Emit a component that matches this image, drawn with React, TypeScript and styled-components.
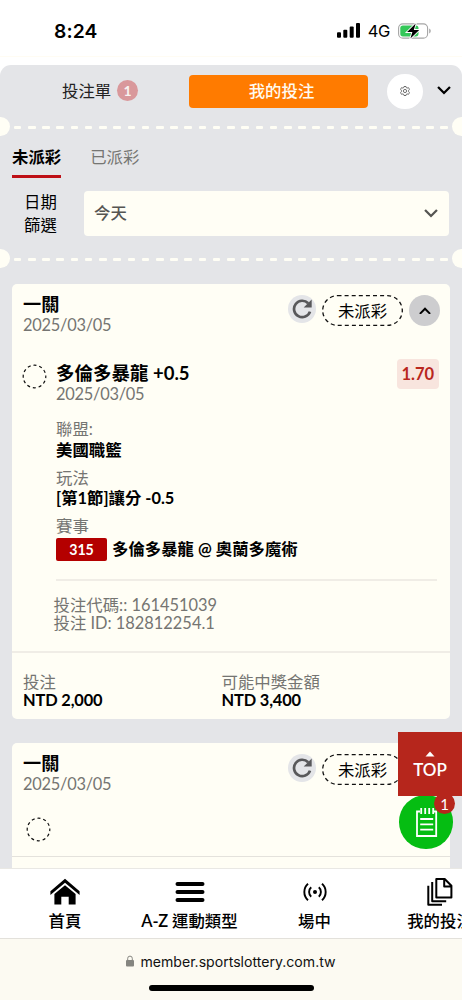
import React from 'react';
import styled, { createGlobalStyle } from 'styled-components';

const Global = createGlobalStyle`
  * { box-sizing: border-box; }
  body { margin: 0; background: #fff; }
`;

const cream = '#fffef5';
const grey = '#e4e5e8';
const muted = '#757572';

const Page = styled.div`
  width: 462px;
  height: 1000px;
  overflow: hidden;
  position: relative;
  display: flex;
  flex-direction: column;
  background: #fff;
  color: #000;
  font-family: Lato, 'Noto Sans CJK TC', sans-serif;
  font-size: 16.4px;
`;

const StatusBar = styled.header`
  height: 57px;
  flex: none;
  display: flex;
  align-items: center;
  justify-content: space-between;
  padding: 5px 31px 0 54px;
  border-bottom: 1px solid #fffcf3;
  margin-bottom: 8px;
  font-family: Inter, sans-serif;
`;
const Clock = styled.span`
  font-size: 19.3px;
  font-weight: 600;
  letter-spacing: 0.1px;
`;
const StatusIcons = styled.div`
  display: flex;
  align-items: center;
  height: 22px;
`;
const Network = styled.span`
  font-size: 16.5px;
  margin: 1px 8px 0 7.5px;
  letter-spacing: -0.3px;
`;

const Panel = styled.main`
  flex: 1;
  min-height: 0;
  overflow: hidden;
  background: ${grey};
  border-radius: 11px 11px 0 0;
`;

const TopTabs = styled.div`
  height: 51.7px;
  display: flex;
  align-items: center;
`;
const SlipTab = styled.div`
  width: 189px;
  padding-left: 62px;
  display: flex;
  align-items: center;
  gap: 6px;
  line-height: 24px;
  color: #222;
`;
const SlipCount = styled.span`
  width: 21px;
  height: 21px;
  border-radius: 50%;
  background: #d9989b;
  color: #f8f3f0;
  font-size: 14px;
  font-weight: 700;
  line-height: 22px;
  text-align: center;
`;
const ActiveTab = styled.div`
  width: 179px;
  height: 33px;
  margin-top: 1px;
  padding-left: 6px;
  border-radius: 4px;
  background: #ff7b00;
  color: #fffaf0;
  font-weight: 500;
  line-height: 32px;
  text-align: center;
`;
const Settings = styled.div`
  width: 35.5px;
  height: 35.5px;
  margin: 1px 14px 0 19px;
  border-radius: 50%;
  background: #fff;
  display: grid;
  place-items: center;
`;

const Perforation = styled.div`
  height: 19.4px;
  display: flex;
  align-items: center;
  justify-content: space-between;
`;
const Notch = styled.i<{ $right?: boolean }>`
  width: 9.6px;
  height: 19.4px;
  background: ${cream};
  border-radius: ${p => (p.$right ? '10px 0 0 10px' : '0 10px 10px 0')};
`;
const Dashes = styled.div`
  display: flex;
  justify-content: space-between;
  width: 434.4px;
  padding-top: 2.6px;
`;
const Dash = styled.i`
  width: 7.6px;
  height: 2.4px;
  border-radius: 1px;
  background: ${cream};
`;

const SubTabs = styled.div`
  height: 42px;
  display: flex;
  gap: 29px;
  padding: 9px 12px 0;
`;
const SubTab = styled.div<{ $active?: boolean }>`
  height: 32.8px;
  line-height: 24px;
  font-weight: ${p => (p.$active ? 700 : 400)};
  color: ${p => (p.$active ? '#000' : muted)};
  border-bottom: 3.4px solid ${p => (p.$active ? '#be1016' : 'transparent')};
`;
const Filter = styled.div`
  height: 70.5px;
  display: flex;
  align-items: center;
  padding: 0 13px 0 24px;
`;
const FilterLabel = styled.div`
  width: 60px;
  line-height: 23.5px;
`;
const Select = styled.div`
  flex: 1;
  height: 45px;
  display: flex;
  align-items: center;
  justify-content: space-between;
  padding: 0 11px 0 10px;
  border-radius: 4px;
  background: ${cream};
  color: #555552;
  font-weight: 500;
  line-height: 24px;
`;

const CardList = styled.div`
  display: flex;
  flex-direction: column;
  gap: 24px;
  padding: 16px 12px 0;
`;
const Card = styled.section`
  background: ${cream};
  border-radius: 5px;
`;
const CardHead = styled.div`
  height: 79px;
  display: flex;
  padding: 9.6px 10px 0 11px;
`;
const Title = styled.div<{ $size?: number }>`
  font-size: ${p => p.$size ?? 18.2}px;
  font-weight: 700;
  line-height: 21px;
  white-space: nowrap;
`;
const DateText = styled.div`
  line-height: 19px;
  color: ${muted};
  letter-spacing: -0.25px;
`;
const HeadActions = styled.div`
  margin-left: auto;
  height: 34px;
  display: flex;
  align-items: center;
  gap: 6px;
`;
const Refresh = styled.div`
  width: 28.5px;
  height: 28.5px;
  margin-top: -3px;
  border-radius: 50%;
  background: ${grey};
  display: grid;
  place-items: center;
`;
const Status = styled.div`
  position: relative;
  width: 81px;
  height: 31px;
  line-height: 32px;
  text-align: center;
`;
const StatusOutline = styled.svg`
  position: absolute;
  inset: 0;
`;
const Collapse = styled.div`
  width: 31px;
  height: 31px;
  border-radius: 50%;
  background: #cdcdcf;
  display: grid;
  place-items: center;
`;
const Selection = styled.div`
  display: flex;
  padding: 0 11px 0 10px;
  height: 55.5px;
`;
const Marker = styled.div`
  width: 25px;
  padding-top: 1px;
`;
const SelectionText = styled.div`
  flex: 1;
  margin-left: 9px;
`;
const Odds = styled.div`
  width: 42.5px;
  height: 30px;
  margin-top: -4px;
  border-radius: 4px;
  background: #f8e5de;
  color: #b9271d;
  font-size: 16.5px;
  font-weight: 700;
  line-height: 31px;
  text-align: center;
`;
const Details = styled.div`
  margin: 0 13px 0 44px;
  height: 162.5px;
  padding-top: 0.6px;
  border-bottom: 2px solid #f0ede6;
`;
const Detail = styled.div`
  height: 48.5px;
`;
const Label = styled.div`
  line-height: 20.5px;
  color: ${muted};
`;
const Value = styled.div`
  display: flex;
  align-items: center;
  font-weight: 700;
  line-height: 20.5px;
  white-space: pre;
`;
const MatchNo = styled.span`
  width: 51px;
  height: 23.5px;
  margin: 1px 5px 0 0;
  border-radius: 2px;
  background: #b40000;
  color: #fff;
  font-size: 14.2px;
  line-height: 24px;
  text-align: center;
`;
const Codes = styled.div`
  height: 72px;
  padding: 15.3px 0 0 41.5px;
  line-height: 18px;
  color: ${muted};
  border-bottom: 2px solid #f0ede6;
`;
const Totals = styled.div`
  height: 66px;
  padding: 19px 11px 0;
  display: grid;
  grid-template-columns: 198.5px 1fr;
`;
const Amount = styled.div`
  font-weight: 700;
  line-height: 15.5px;
  letter-spacing: -0.15px;
`;
const PendingRow = styled.div`
  height: 35px;
  margin-top: -5px;
  padding: 0 13.5px;
`;
const NextRow = styled.div`
  height: 60px;
  margin-top: 4px;
  border-top: 1px solid #e4e2dc;
`;

const TopButton = styled.div`
  position: absolute;
  left: 398px;
  top: 732px;
  width: 64px;
  height: 64px;
  background: #b6261c;
  color: #fff;
  display: flex;
  flex-direction: column;
  align-items: center;
  padding-top: 19px;
  font-size: 17px;
  font-weight: 600;
  line-height: 26px;
  z-index: 2;
`;
const SlipButton = styled.div`
  position: absolute;
  left: 399px;
  top: 795px;
  width: 53.5px;
  height: 53.5px;
  border-radius: 50%;
  background: #05bd12;
  padding: 12px 0 0 16px;
`;
const SlipBadge = styled.span`
  position: absolute;
  left: 35px;
  top: -2px;
  width: 21px;
  height: 21px;
  border-radius: 50%;
  background: #b6261c;
  color: #fff;
  font-size: 15px;
  line-height: 22px;
  text-align: center;
`;

const NavBar = styled.nav`
  height: 70px;
  flex: none;
  display: grid;
  grid-template-columns: 130px 119px 131px 120px;
  background: #fff;
  border-top: 1px solid #e9e8e4;
`;
const NavItem = styled.div`
  display: flex;
  flex-direction: column;
  align-items: center;
  font-weight: 500;
  line-height: 22px;
  white-space: nowrap;
`;
const NavIcon = styled.div`
  height: 41px;
  padding-top: 8px;
`;
const NavLabel = styled.div`
  b { font-weight: 600; letter-spacing: -0.2px; }
`;
const Browser = styled.footer`
  height: 62px;
  flex: none;
  display: flex;
  flex-direction: column;
  align-items: center;
  background: #fcfaf2;
  border-top: 1px solid #e3e1db;
`;
const Address = styled.div`
  height: 45.5px;
  padding-bottom: 1.5px;
  display: flex;
  align-items: center;
  gap: 6px;
  font-family: Inter, sans-serif;
  font-size: 14.1px;
  color: #111;
`;
const HomeIndicator = styled.div`
  width: 165px;
  height: 6px;
  border-radius: 3px;
  background: #000;
`;

const Chevron = ({ up = false, color = '#000', size = 14 }: { up?: boolean; color?: string; size?: number }) => (
  <svg width={size} height={size * 0.64} viewBox="0 0 14 9" fill="none" stroke={color} strokeWidth="2.3">
    <path d={up ? 'M1 8 7 2l6 6' : 'M1 1l6 6 6-6'} />
  </svg>
);

const PendingCircle = () => (
  <svg width="25" height="25" viewBox="0 0 25 25" fill="none" stroke="#111" strokeWidth="1.2">
    <circle cx="12.5" cy="12.5" r="11.3" strokeDasharray="3.1 2.82" strokeDashoffset="1.5" />
  </svg>
);

const Divider = () => (
  <Perforation>
    <Notch />
    <Dashes>{Array.from({ length: 31 }, (_, i) => <Dash key={i} />)}</Dashes>
    <Notch $right />
  </Perforation>
);

const Head = () => (
  <CardHead>
    <div>
      <Title>一關</Title>
      <DateText>2025/03/05</DateText>
    </div>
    <HeadActions>
      <Refresh>
        <svg width="20" height="20" viewBox="0 0 20 20" fill="none" stroke="#58585a" strokeWidth="2.7">
          <path d="M16.2 4.3A8.2 8.2 0 1 0 18 12.6" />
          <path d="M19.7.6v8h-8z" fill="#58585a" stroke="none" />
        </svg>
      </Refresh>
      <Status>
        <StatusOutline width="81" height="31" fill="none" stroke="#111" strokeWidth="1.3">
          <rect x=".7" y=".7" width="79.6" height="29.6" rx="14.8" strokeDasharray="4 3.1" />
        </StatusOutline>
        未派彩
      </Status>
      <Collapse><Chevron up size={12} /></Collapse>
    </HeadActions>
  </CardHead>
);

export default function App() {
  return (
    <Page>
      <Global />
      <StatusBar>
        <Clock>8:24</Clock>
        <StatusIcons>
          <svg width="23" height="15" viewBox="0 0 23 15">
            <rect x="0" y="9.3" width="4" height="5.4" rx="1" />
            <rect x="6.3" y="6.8" width="4" height="7.9" rx="1" />
            <rect x="12.7" y="3.5" width="4" height="11.2" rx="1" />
            <rect x="19" y="0" width="4" height="14.7" rx="1" />
          </svg>
          <Network>4G</Network>
          <svg width="33" height="16" viewBox="0 0 33 16">
            <rect x=".6" y=".9" width="29" height="14.2" rx="4.2" fill="none" stroke="#a5a5a5" strokeWidth="1.1" />
            <path d="M31.2 5.6v4.8c1-.4 1.5-1.3 1.5-2.4s-.5-2-1.5-2.4z" fill="#a5a5a5" />
            <rect x="2.3" y="2.6" width="18.2" height="10.8" rx="2.6" fill="#34c759" />
            <path d="M17.7.6 9.1 9h5.3l-2 6.4L21.2 7h-5.4z" fill="#000" stroke="#fff" strokeWidth="1.8" paintOrder="stroke" />
          </svg>
        </StatusIcons>
      </StatusBar>

      <Panel>
        <TopTabs>
          <SlipTab>投注單<SlipCount>1</SlipCount></SlipTab>
          <ActiveTab>我的投注</ActiveTab>
          <Settings>
            <svg width="10" height="10" viewBox="0 0 20 20" fill="none" stroke="#444" strokeWidth="1.5">
              <path d="M8 1h4l.7 2.4 1.6.8 2.5-1 2.2 3.4-1.8 1.9v3l1.8 1.9-2.2 3.4-2.5-1-1.6.8L12 19H8l-.7-2.4-1.6-.8-2.5 1L1 13.4l1.8-1.9v-3L1 6.6l2.2-3.4 2.5 1 1.6-.8z" />
              <circle cx="10" cy="10" r="3.2" />
            </svg>
          </Settings>
          <Chevron />
        </TopTabs>
        <Divider />
        <SubTabs>
          <SubTab $active>未派彩</SubTab>
          <SubTab>已派彩</SubTab>
        </SubTabs>
        <Filter>
          <FilterLabel>日期<br />篩選</FilterLabel>
          <Select>今天<Chevron color="#555552" /></Select>
        </Filter>
        <Divider />

        <CardList>
          <Card>
            <Head />
            <Selection>
              <Marker><PendingCircle /></Marker>
              <SelectionText>
                <Title $size={18.5}>多倫多暴龍 +0.5</Title>
                <DateText>2025/03/05</DateText>
              </SelectionText>
              <Odds>1.70</Odds>
            </Selection>
            <Details>
              <Detail><Label>聯盟:</Label><Value>美國職籃</Value></Detail>
              <Detail><Label>玩法</Label><Value>[第1節]讓分 -0.5</Value></Detail>
              <Detail><Label>賽事</Label><Value><MatchNo>315</MatchNo>多倫多暴龍 @ 奧蘭多魔術</Value></Detail>
            </Details>
            <Codes>
              <div>投注代碼:: 161451039</div>
              <div>投注 ID: 182812254.1</div>
            </Codes>
            <Totals>
              <div><Label>投注</Label><Amount>NTD 2,000</Amount></div>
              <div><Label>可能中獎金額</Label><Amount>NTD 3,400</Amount></div>
            </Totals>
          </Card>

          <Card>
            <Head />
            <PendingRow><PendingCircle /></PendingRow>
            <NextRow />
          </Card>
        </CardList>
      </Panel>

      <NavBar>
        <NavItem>
          <NavIcon>
            <svg width="30" height="28" viewBox="0 0 30 28">
              <path d="M15 1.8 29.6 14.2v3.8L15 5.8.4 18v-3.8z" />
              <path d="M15 8.2 25.6 17v10.5h-6.9v-7.8h-7.4v7.8H4.4V17z" />
            </svg>
          </NavIcon>
          <NavLabel>首頁</NavLabel>
        </NavItem>
        <NavItem>
          <NavIcon>
            <svg width="30" height="28" viewBox="0 0 30 28" stroke="#000" strokeWidth="4" strokeLinecap="round">
              <path d="M2.5 7h25M2.5 15h25M2.5 23h25" />
            </svg>
          </NavIcon>
          <NavLabel><b>A-Z</b> 運動類型</NavLabel>
        </NavItem>
        <NavItem>
          <NavIcon>
            <svg width="24" height="28" viewBox="0 0 24 28" fill="none" stroke="#000" strokeWidth="1.9">
              <circle cx="12" cy="15" r="2" fill="#000" stroke="none" />
              <path d="M8.2 10.3a6.3 6.3 0 0 0 0 9.4M15.8 10.3a6.3 6.3 0 0 1 0 9.4M5 6.8a11 11 0 0 0 0 16.4M19 6.8a11 11 0 0 1 0 16.4" />
            </svg>
          </NavIcon>
          <NavLabel>場中</NavLabel>
        </NavItem>
        <NavItem>
          <NavIcon>
            <svg width="26" height="30" viewBox="0 0 26 30" fill="none" stroke="#000" strokeWidth="2" strokeLinejoin="round">
              <path d="M9.3 2h8.4l6.7 6.8v11.7H9.3zM17.2 2.4v7h6.8M5.2 5v19.3h14M1.3 8.8v18.9H15" />
            </svg>
          </NavIcon>
          <NavLabel>我的投注</NavLabel>
        </NavItem>
      </NavBar>
      <Browser>
        <Address>
          <svg width="8" height="12" viewBox="0 0 8 12">
            <rect y="5" width="8" height="6.5" rx="1" fill="#858580" />
            <path d="M1.7 5.5V3.4a2.3 2.3 0 0 1 4.6 0v2.1" fill="none" stroke="#858580" strokeWidth="1" />
          </svg>
          member.sportslottery.com.tw
        </Address>
        <HomeIndicator />
      </Browser>

      <SlipButton>
        <svg width="23" height="31" viewBox="0 0 23 31" fill="none" stroke="#fff" strokeWidth="1.8">
          <path d="M5 4.5H2V29h19.2V4.5h-3M6.2 1v6M10.2 1v6M14.2 1v6M18.2 1v6M5.2 12h13M5.2 17.3h13M5.2 22.7h13" />
        </svg>
        <SlipBadge>1</SlipBadge>
      </SlipButton>
      <TopButton>
        <svg width="10" height="6" viewBox="0 0 10 6" fill="#fff"><path d="M5 .5 9.5 5.5h-9z" /></svg>
        TOP
      </TopButton>
    </Page>
  );
}
